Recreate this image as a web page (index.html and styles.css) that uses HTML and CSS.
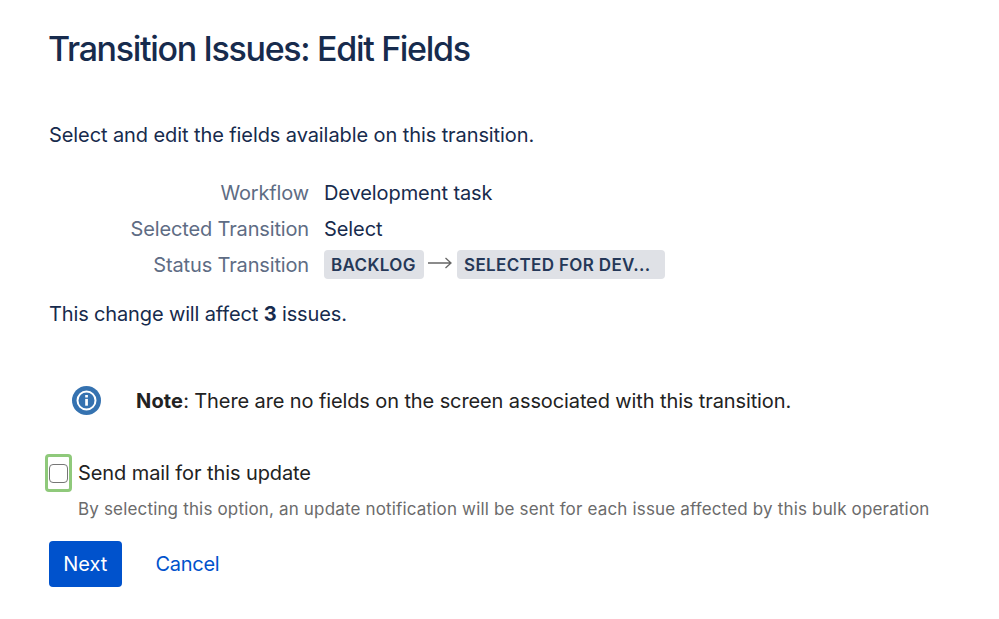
FILE: index.html
```html
<!DOCTYPE html>
<html lang="en">
<head>
    <meta charset="UTF-8">
    <meta name="viewport" content="width=device-width, initial-scale=1.0">
    <title>Transition Issues: Edit Fields</title>
    <link rel="stylesheet" href="styles.css">
</head>
<body>
    <h1>Transition Issues: Edit Fields</h1>
    <p class="intro">Select and edit the fields available on this transition.</p>

    <dl class="details">
        <dt>Workflow</dt>
        <dd>Development task</dd>
        <dt>Selected Transition</dt>
        <dd>Select</dd>
        <dt>Status Transition</dt>
        <dd class="statuses">
            <span class="lozenge backlog">BACKLOG</span>
            <svg class="arrow" width="24" height="12" viewBox="0 0 24 12" fill="none" stroke="#666" stroke-width="1.3">
                <path d="M0 6H23M17.5 1L23 6L17.5 11"/>
            </svg>
            <span class="lozenge selected">SELECTED FOR DEV...</span>
        </dd>
    </dl>

    <p class="affected">This change will affect <strong>3</strong> issues.</p>

    <div class="note">
        <svg width="30" height="30" viewBox="0 0 30 30">
            <circle cx="14.5" cy="14.5" r="14.5" fill="#3572b0"/>
            <circle cx="14.5" cy="14.5" r="9" fill="none" stroke="#fff" stroke-width="2"/>
            <rect x="13.2" y="9" width="2.7" height="2.5" fill="#fff"/>
            <rect x="13.2" y="12.9" width="2.7" height="6.8" fill="#fff"/>
        </svg>
        <p><strong>Note</strong>: There are no fields on the screen associated with this transition.</p>
    </div>

    <form>
        <label class="mail">
            <span class="focus-ring"><input type="checkbox"></span>
            <span>Send mail for this update</span>
        </label>
        <p class="description">By selecting this option, an update notification will be sent for each issue affected by this bulk operation</p>
        <div class="buttons">
            <button class="btn" type="button">Next</button>
            <a class="cancel" href="#">Cancel</a>
        </div>
    </form>
</body>
</html>
```

FILE: styles.css
```css
* {
    box-sizing: border-box;
}

body {
    margin: 0;
    padding: 28px 49px 0;
    background: #fff;
    color: #172b4d;
    font-family: Inter, sans-serif;
    font-size: 20px;
    line-height: 36px;
    letter-spacing: -0.09px;
    white-space: nowrap;
}

h1, p, dl, dd {
    margin: 0;
}

h1 {
    margin-left: -1px;
    font-size: 34px;
    font-weight: 550;
    line-height: 42px;
    letter-spacing: -1.32px;
}

.intro {
    margin-top: 47px;
}

.details {
    display: grid;
    grid-template-columns: 260px auto;
    column-gap: 15px;
    margin-top: 22px;
}

dt {
    color: #5e6c84;
    letter-spacing: -0.15px;
    text-align: right;
}

.statuses {
    display: flex;
    align-items: center;
}

.lozenge {
    height: 29px;
    margin-top: -1px;
    padding: 0 7px;
    border-radius: 4px;
    background: #dfe1e6;
    color: #253858;
    font-size: 17px;
    font-weight: 600;
    line-height: 30px;
    letter-spacing: 0.35px;
}

.backlog {
    width: 100px;
}

.arrow {
    margin: -4px 5px 0 4px;
}

.selected {
    width: 208px;
}

.affected {
    margin-top: 13px;
    letter-spacing: -0.14px;
}

.note {
    display: flex;
    align-items: center;
    gap: 34px;
    margin-top: 51px;
    padding-left: 23px;
    color: #222;
    letter-spacing: -0.11px;
}

.note strong {
    letter-spacing: 0.15px;
}

.mail {
    display: flex;
    align-items: center;
    gap: 6px;
    margin: 35px 0 0 -4px;
    color: #222;
}

.focus-ring {
    display: flex;
    align-items: center;
    justify-content: center;
    width: 27px;
    height: 38px;
    border: 3px solid #8fc97b;
    border-radius: 4px;
}

input {
    appearance: none;
    width: 19px;
    height: 19px;
    margin: 0;
    border: 1px solid #767676;
    border-radius: 4px;
    background: #fff;
}

.description {
    padding-left: 29px;
    color: #6b6b6b;
    font-size: 17px;
    line-height: 34px;
    letter-spacing: 0.165px;
}

.buttons {
    display: flex;
    align-items: center;
    gap: 34px;
    margin-top: 15px;
}

.btn {
    width: 72.5px;
    height: 46px;
    padding: 0;
    border: 0;
    border-radius: 4px;
    background: #0052cc;
    color: #fff;
    font: inherit;
    letter-spacing: inherit;
}

.cancel {
    color: #0052cc;
    letter-spacing: -0.3px;
    text-decoration: none;
}
```
